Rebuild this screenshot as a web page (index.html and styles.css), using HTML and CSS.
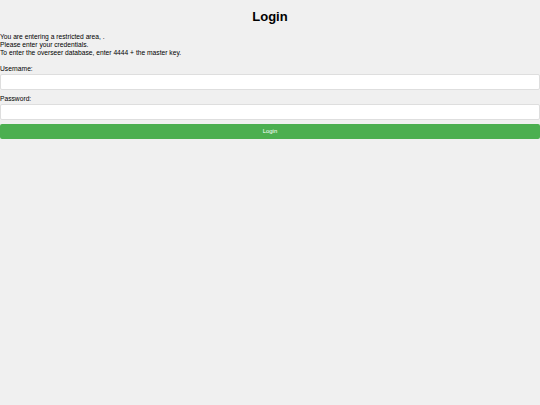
FILE: index.html
```html
<!DOCTYPE html>
<html lang="en">
<head>
<meta charset="utf-8">
<title>Login</title>
<link rel="stylesheet" href="styles.css">
</head>
<body class="page">
  <h1 class="title">Login</h1>
  <p class="intro">You are entering a restricted area, .<br>Please enter your credentials.<br>To enter the overseer database, enter 4444 + the master key.</p>
  <form class="login-form">
    <label class="field-label" for="username">Username:</label>
    <input class="field-input field-input-user" id="username" type="text">
    <label class="field-label field-label-pass" for="password">Password:</label>
    <input class="field-input field-input-pass" id="password" type="password">
    <button class="submit-btn" type="button">Login</button>
  </form>
</body>
</html>
```

FILE: styles.css
```css
html, body {
  margin: 0;
  padding: 0;
}
.page {
  background: #f0f0f0;
  color: #000;
  font-family: "Liberation Sans", Arial, sans-serif;
  font-size: 6.7px;
  line-height: 7.6px;
  min-height: 405px;
}
.title {
  font-size: 13px;
  line-height: 15px;
  font-weight: bold;
  text-align: center;
  margin: 8.5px 0 9.9px;
}
.intro {
  margin: 0 0 8.6px;
}
.login-form {
  display: flex;
  flex-direction: column;
}
.field-label {
  display: block;
  line-height: 7.6px;
}
.field-label-pass {
  margin-top: 4.4px;
}
.field-input {
  display: block;
  box-sizing: border-box;
  width: 100%;
  height: 16px;
  margin: 0;
  padding: 0 4px;
  border: 1px solid #dedede;
  border-radius: 2px;
  background: #ffffff;
  font: inherit;
}
.field-input-user {
  margin-top: 1.8px;
}
.field-input-pass {
  margin-top: 1.5px;
  height: 16.5px;
}
.submit-btn {
  display: block;
  box-sizing: border-box;
  width: 100%;
  height: 15px;
  margin-top: 4px;
  padding: 0;
  border: none;
  border-radius: 2px;
  background: #4caf50;
  color: #ffffff;
  font-family: "Liberation Sans", Arial, sans-serif;
  font-size: 5.9px;
  line-height: 15px;
  text-align: center;
}
```
